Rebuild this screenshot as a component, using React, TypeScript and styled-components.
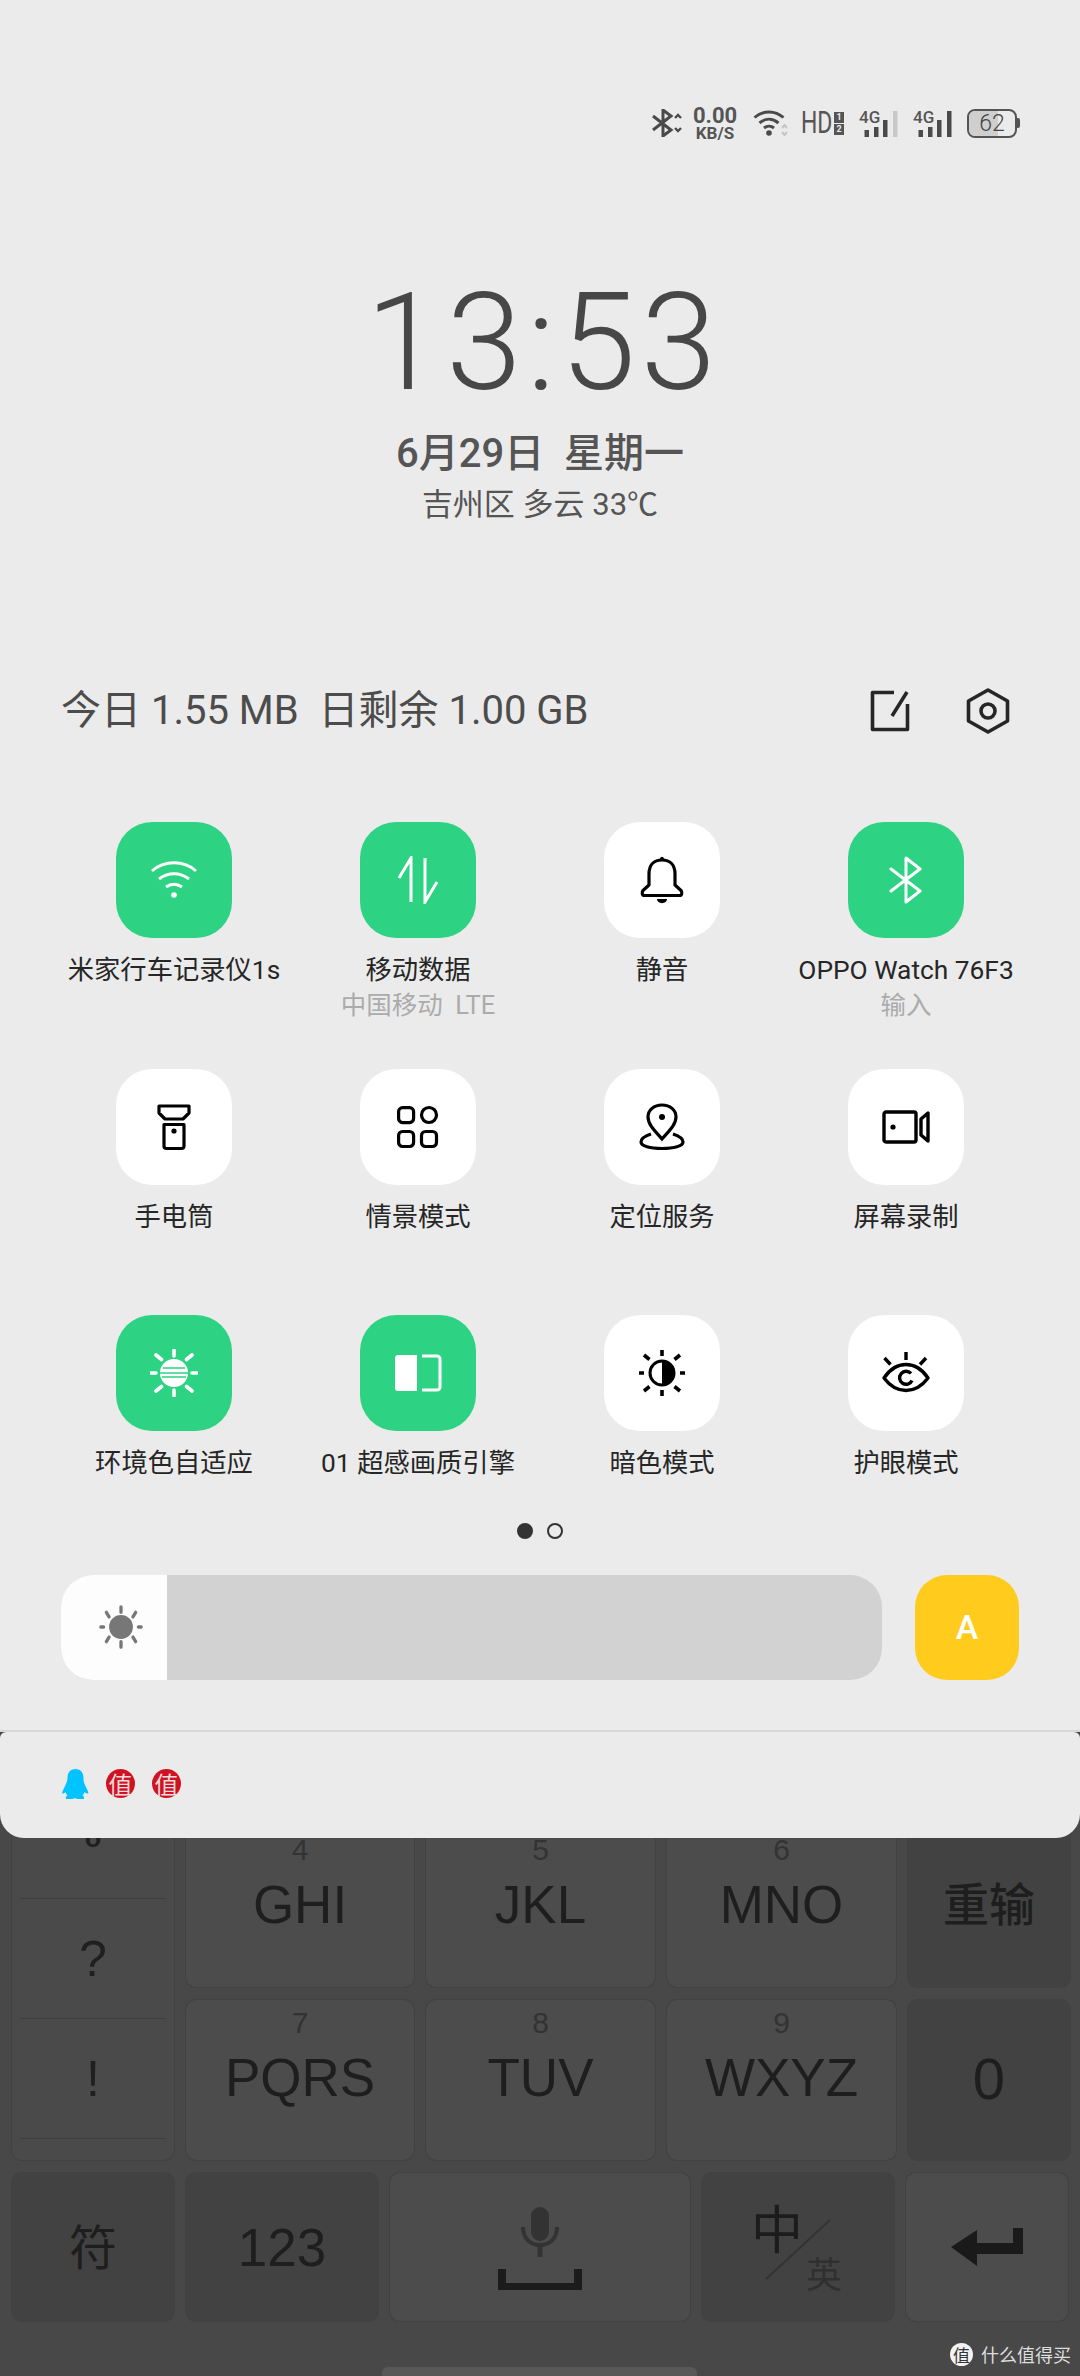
import React from 'react';
import styled, { createGlobalStyle } from 'styled-components';

const FONT = 'Roboto, "Noto Sans CJK SC", sans-serif';

const GlobalStyle = createGlobalStyle`
  html, body {
    margin: 0;
    padding: 0;
    background: #484848;
  }
  body {
    font-family: ${FONT};
  }
`;

const Screen = styled.div`
  position: relative;
  width: 1080px;
  height: 2376px;
  overflow: hidden;
  background: #484848;
  display: flex;
  flex-direction: column;
  justify-content: flex-end;
`;

/* ---------- shade ---------- */

const Shade = styled.div`
  position: absolute;
  top: 0;
  left: 0;
  right: 0;
  z-index: 2;
`;

const QuickPanel = styled.div`
  height: 1732px;
  box-sizing: border-box;
  background: #ebebeb;
  border-bottom: 2px solid #d8d8d8;
  display: flex;
  flex-direction: column;
`;

const StatusBar = styled.div`
  display: flex;
  justify-content: flex-end;
  align-items: center;
  height: 34px;
  margin-top: 106px;
  padding-right: 60px;
  color: #4a4a4a;
`;

const Speed = styled.div`
  width: 44px;
  margin: 0 16px 0 11px;
  display: flex;
  flex-direction: column;
  align-items: center;
  font-weight: 700;
  color: #555;
`;

const SpeedValue = styled.span`
  font-size: 22px;
  line-height: 20px;
`;

const SpeedUnit = styled.span`
  font-size: 17px;
  line-height: 15px;
`;

const Hd = styled.div`
  display: flex;
  align-items: center;
  margin: 0 15px 0 12px;
  color: #555;
`;

const HdText = styled.span`
  display: inline-block;
  width: 32px;
  font-size: 31px;
  font-weight: 400;
  line-height: 34px;
  transform: scaleX(0.74);
  transform-origin: left center;
`;

const SimStack = styled.div`
  display: flex;
  flex-direction: column;
  gap: 1px;
  margin-left: 1px;
`;

const SimNo = styled.span`
  width: 10px;
  height: 11px;
  background: #555;
  color: #ebebeb;
  font-size: 9px;
  font-weight: 700;
  line-height: 11px;
  text-align: center;
`;

const Signal = styled.div`
  position: relative;
  width: 40px;
  height: 28px;
  margin-right: 14px;
`;

const SignalLabel = styled.span`
  position: absolute;
  left: 0;
  top: 0;
  font-size: 17px;
  font-weight: 500;
  line-height: 17px;
  color: #555;
`;

const Battery = styled.div`
  position: relative;
  width: 46px;
  height: 25px;
  border: 2px solid #555;
  border-radius: 8px;
  overflow: hidden;
  display: flex;
  align-items: center;
  justify-content: center;
  font-size: 23px;
  font-weight: 300;
  color: #444;
  &::before {
    content: '';
    position: absolute;
    inset: 0 38% 0 0;
    background: #cfcfcf;
  }
`;

const BatteryText = styled.span`
  position: relative;
`;

const BatteryCap = styled.span`
  width: 3px;
  height: 10px;
  background: #555;
  border-radius: 0 2px 2px 0;
`;

const Clock = styled.div`
  margin-top: 143px;
  padding-left: 7px;
  text-align: center;
  font-family: Roboto, sans-serif;
  font-size: 136px;
  font-weight: 300;
  line-height: 120px;
  letter-spacing: 5px;
  color: #474747;
`;

const DateLine = styled.div`
  margin-top: 26px;
  text-align: center;
  font-size: 40px;
  font-weight: 500;
  line-height: 50px;
  color: #555;
  white-space: pre;
`;

const Weather = styled.div`
  margin-top: 5px;
  text-align: center;
  font-size: 31px;
  line-height: 42px;
  color: #555;
`;

const UsageRow = styled.div`
  display: flex;
  align-items: center;
  justify-content: space-between;
  height: 60px;
  margin-top: 155px;
  padding: 0 70px 0 61px;
`;

const UsageText = styled.div`
  font-size: 40px;
  line-height: 60px;
  color: #4c4c4c;
  white-space: pre;
`;

const UsageActions = styled.div`
  display: flex;
  align-items: center;
  gap: 56px;
`;

const TileGrid = styled.div`
  display: grid;
  grid-template-columns: repeat(4, 244px);
  grid-auto-rows: 246.5px;
  margin-top: 81px;
  padding: 0 52px;
`;

const Cell = styled.div`
  display: flex;
  flex-direction: column;
  align-items: center;
`;

const Tile = styled.div<{ $on?: boolean }>`
  width: 116px;
  height: 116px;
  border-radius: 36px;
  background: ${(p) => (p.$on ? '#2dd283' : '#ffffff')};
  color: ${(p) => (p.$on ? '#ffffff' : '#000000')};
  display: flex;
  align-items: center;
  justify-content: center;
`;

const TileLabel = styled.div`
  margin-top: 14px;
  font-size: 26.3px;
  line-height: 36px;
  color: #262626;
  white-space: nowrap;
`;

const TileSub = styled.div`
  font-size: 25.5px;
  line-height: 34px;
  color: #ababab;
  white-space: pre;
`;

const PageDots = styled.div`
  display: flex;
  justify-content: center;
  gap: 14px;
  margin-top: -39px;
`;

const Dot = styled.span<{ $active?: boolean }>`
  width: 16px;
  height: 16px;
  box-sizing: border-box;
  border-radius: 50%;
  border: 2px solid #333;
  background: ${(p) => (p.$active ? '#333' : 'transparent')};
`;

const BrightnessRow = styled.div`
  display: flex;
  gap: 33px;
  margin-top: 36px;
  padding: 0 61px;
`;

const Slider = styled.div`
  width: 821px;
  height: 105px;
  border-radius: 32px;
  overflow: hidden;
  background: #d2d2d2;
`;

const SliderFill = styled.div`
  width: 106px;
  height: 100%;
  box-sizing: border-box;
  padding-left: 14px;
  background: #fdfdfd;
  display: flex;
  align-items: center;
  justify-content: center;
`;

const AutoButton = styled.div`
  width: 104px;
  height: 105px;
  border-radius: 32px;
  background: #ffcc1e;
  color: #fff;
  font-size: 34px;
  font-weight: 500;
  display: flex;
  align-items: center;
  justify-content: center;
`;

const NotifyCard = styled.div`
  height: 106px;
  box-sizing: border-box;
  padding: 37px 0 0 62px;
  display: flex;
  align-items: flex-start;
  gap: 17px;
  background: #ebebeb;
  border-radius: 6px 6px 24px 24px;
`;

const ZhiBadge = styled.span`
  width: 29px;
  height: 29px;
  border-radius: 50%;
  background: #cf1322;
  color: #f6dcdc;
  font-family: "Noto Sans CJK SC", sans-serif;
  font-size: 24px;
  line-height: 29px;
  text-align: center;
`;

/* ---------- keyboard behind the shade ---------- */

const Keyboard = styled.div`
  display: flex;
  flex-direction: column;
  gap: 13px;
  padding: 0 12px 55px;
`;

const KeyGrid = styled.div`
  display: grid;
  grid-template-columns: 162px 228px 229px 229px 162px;
  grid-template-rows: 160px 160px;
  gap: 13px 12px;
`;

const SymbolColumn = styled.div`
  grid-row: span 2;
  box-sizing: border-box;
  display: flex;
  flex-direction: column;
  justify-content: flex-end;
  padding: 0 8px 21px;
  background: #4a4a4a;
  border-radius: 0 0 10px 10px;
  box-shadow: 0 0 0 1px #424242;
`;

const SymbolItem = styled.div`
  flex: none;
  height: 120px;
  box-sizing: border-box;
  border-bottom: 1px solid #3e3e3e;
  display: flex;
  align-items: center;
  justify-content: center;
  font-family: "Liberation Sans", sans-serif;
  font-size: 50px;
  color: #1f1f1f;
`;

const Period = styled.span`
  font-size: 27px;
  font-weight: 700;
`;

const Key = styled.div<{ $dark?: boolean; $w?: number }>`
  position: relative;
  ${(p) => (p.$w ? `width: ${p.$w}px; flex: none;` : '')}
  background: ${(p) => (p.$dark ? '#424242' : '#4c4c4c')};
  border-radius: 10px;
  box-shadow: 0 0 0 1px #424242;
  display: flex;
  flex-direction: column;
  align-items: center;
  justify-content: center;
  font-family: "Liberation Sans", "Noto Sans CJK SC", sans-serif;
  font-size: 53px;
  color: #1e1e1e;
`;

const LetterKey = styled(Key)`
  justify-content: flex-start;
  padding-top: 5px;
`;

const KeyNum = styled.span`
  font-size: 30px;
  line-height: 36px;
  color: #333;
`;

const KeyLetters = styled.span`
  line-height: 58px;
  margin-top: 8px;
`;

const ResetLabel = styled.span`
  font-size: 46px;
  font-weight: 500;
  margin-bottom: 12px;
`;

const ZeroLabel = styled.span`
  font-size: 58px;
  margin-bottom: 4px;
`;

const SymbolKeyLabel = styled.span`
  font-size: 48px;
  margin-bottom: 6px;
`;

const BottomRow = styled.div`
  display: flex;
  gap: 12px;
  height: 148px;
`;

const LangKey = styled(Key)`
  display: block;
`;

const LangMain = styled.span`
  position: absolute;
  left: 49px;
  top: 24px;
  font-family: "Noto Sans CJK SC", sans-serif;
  font-size: 52px;
  line-height: 60px;
  color: #1c1c1c;
`;

const LangSub = styled.span`
  position: absolute;
  left: 104px;
  top: 77px;
  font-family: "Noto Sans CJK SC", sans-serif;
  font-size: 36px;
  line-height: 44px;
  color: #303030;
`;

const LangSlash = styled.svg`
  position: absolute;
  left: 62px;
  top: 46px;
`;

const Watermark = styled.div`
  position: absolute;
  right: 9px;
  bottom: 9px;
  display: flex;
  align-items: center;
  gap: 8px;
  color: #dedede;
  font-size: 18px;
  line-height: 26px;
  font-family: "Noto Sans CJK SC", sans-serif;
`;

const WatermarkLogo = styled.span`
  width: 23px;
  height: 23px;
  border-radius: 50%;
  background: #f2f2f2;
  color: #333;
  font-size: 17px;
  line-height: 23px;
  text-align: center;
`;

const HomeBar = styled.div`
  position: absolute;
  left: 382px;
  bottom: 0;
  width: 315px;
  height: 9px;
  border-radius: 6px 6px 0 0;
  background: #585858;
`;

/* ---------- drawings ---------- */

const BluetoothStatus = () => (
  <svg width="31" height="28" viewBox="0 0 31 28" fill="none" stroke="#4a4a4a" strokeWidth="3">
    <path d="M2 7l18 14-8 6V1l8 6L2 21" />
    <path d="M24 9l3-3 3 3M24 19l3 3 3-3" strokeWidth="2.4" />
  </svg>
);

const WifiStatus = () => (
  <svg width="36" height="28" viewBox="0 0 36 28" fill="none">
    <path d="M1.5 8.5C10 1 22 1 30.5 8.5M6.500 14c6-5 13-5 19 0M11 19c3-2.500 7-2.500 10 0" stroke="#4a4a4a" strokeWidth="3" />
    <circle cx="16" cy="24" r="2.800" fill="#4a4a4a" />
    <path d="M29 19l2.500-3 2.500 3M29 23l2.500 3 2.500-3" stroke="#c4c4c4" strokeWidth="2" />
  </svg>
);

const Bars = ({ last }: { last: string }) => (
  <svg width="40" height="28" viewBox="0 0 40 28" style={{ position: 'absolute', left: 0, top: 0 }}>
    <rect x="5.500" y="21" width="4.500" height="7" fill="#4a4a4a" />
    <rect x="15" y="18" width="4.500" height="10" fill="#4a4a4a" />
    <rect x="24" y="11" width="4.500" height="17" fill="#4a4a4a" />
    <rect x="34" y="2" width="4.500" height="26" fill={last} />
  </svg>
);

const EditIcon = () => (
  <svg width="40" height="42" viewBox="0 0 40 42" fill="none" stroke="#262626" strokeWidth="3.600" strokeLinejoin="round">
    <path d="M24 2.500H2.500v37h35V14" />
    <path d="M37 2L22 26" />
  </svg>
);

const GearIcon = () => (
  <svg width="44" height="46" viewBox="0 0 44 46" fill="none" stroke="#262626" strokeWidth="3.600">
    <path d="M22 2l19.500 11v20L22 44 2.500 33V13z" strokeLinejoin="round" />
    <circle cx="22" cy="23" r="7" />
  </svg>
);

const WifiIcon = () => (
  <svg width="48" height="48" viewBox="0 0 48 48" fill="none" stroke="currentColor" strokeWidth="3">
    <path d="M2 15c12-11 32-11 44 0M9 23c9-7 21-7 30 0M16 31c5-3.500 11-3.500 16 0" />
    <circle cx="24" cy="39" r="2.800" fill="currentColor" stroke="none" />
  </svg>
);

const DataIcon = () => (
  <svg width="48" height="48" viewBox="0 0 48 48" fill="none" stroke="currentColor" strokeWidth="3">
    <path d="M5 22L17 2v44" />
    <path d="M31 2v44l12-20" />
  </svg>
);

const BellIcon = () => (
  <svg width="48" height="48" viewBox="0 0 48 48" fill="none" stroke="currentColor" strokeWidth="3.200" strokeLinejoin="round">
    <path d="M11 18C11 9 16 4 24 4s13 5 13 14v11l6 5.500c1.500 1.500 1 5-1.500 5h-35c-2.500 0-3-3.500-1.500-5l6-5.500z" />
    <circle cx="24" cy="2.500" r="1.800" fill="currentColor" stroke="none" />
    <path d="M19 43h10c0 5.500-10 5.500-10 0z" fill="currentColor" stroke="none" />
  </svg>
);

const BluetoothIcon = () => (
  <svg width="48" height="48" viewBox="0 0 48 48" fill="none" stroke="currentColor" strokeWidth="3" strokeLinejoin="round" strokeLinecap="round">
    <path d="M9 13l29 22-14 11V2l14 11L9 35" />
  </svg>
);

const FlashlightIcon = () => (
  <svg width="48" height="48" viewBox="0 0 48 48" fill="none" stroke="currentColor" strokeWidth="3.200" strokeLinejoin="round">
    <path d="M9 3h30v7l-6 6H15l-6-6z" />
    <path d="M14 21.500h20V43c0 1.500-1 2.500-2.500 2.500h-15c-1.500 0-2.500-1-2.500-2.500z" />
    <circle cx="24" cy="28" r="2.600" fill="currentColor" stroke="none" />
  </svg>
);

const ScenesIcon = () => (
  <svg width="48" height="48" viewBox="0 0 48 48" fill="none" stroke="currentColor" strokeWidth="3.200">
    <rect x="4.600" y="4.600" width="15" height="15" rx="4" />
    <circle cx="35" cy="12" r="7.500" />
    <rect x="4.600" y="28.500" width="15" height="15" rx="4" />
    <rect x="27.500" y="28.500" width="15" height="15" rx="4" />
  </svg>
);

const LocationIcon = () => (
  <svg width="48" height="48" viewBox="0 0 48 48" fill="none" stroke="currentColor" strokeWidth="3.200">
    <path d="M24 36c-6-7-14-14-14-22C10 7 16 2 24 2s14 5 14 12c0 8-8 15-14 22z" />
    <path d="M13 31c-6 2-10 5-10 8 0 4 9 6.500 21 6.500s21-2.500 21-6.500c0-3-4-6-10-8" />
    <circle cx="24" cy="14" r="3" fill="currentColor" stroke="none" />
  </svg>
);

const VideoIcon = () => (
  <svg width="48" height="36" viewBox="0 0 48 36" fill="none" stroke="currentColor" strokeWidth="3.400" strokeLinejoin="round">
    <rect x="2" y="3" width="32" height="30" rx="2" />
    <path d="M46 4v28l-7-6V10z" />
    <circle cx="11" cy="18" r="2.600" fill="currentColor" stroke="none" />
  </svg>
);

const Rays = ({ cap = 'butt' }: { cap?: 'butt' | 'round' }) => (
  <g stroke="currentColor" strokeWidth="3.600" strokeLinecap={cap}>
    <path d="M24 1v6M24 41v6M1 24h5M42 24h5M6 6l5.500 4.500M42 6l-5.500 4.500M6 42l5.500-4.500M42 42l-5.500-4.500" />
  </g>
);

const AmbientIcon = () => (
  <svg width="48" height="48" viewBox="0 0 48 48" fill="none">
    <Rays cap="round" />
    <circle cx="24" cy="24" r="14" fill="currentColor" />
    <path d="M13 19h22M10 24h28M12 28h24" stroke="#2dd283" strokeWidth="1.600" />
  </svg>
);

const EngineIcon = () => (
  <svg width="48" height="40" viewBox="0 0 48 40" fill="none">
    <path d="M4 2h19v36H4a3 3 0 0 1-3-3V5a3 3 0 0 1 3-3z" fill="currentColor" />
    <path d="M28 3h15a3 3 0 0 1 3 3v28a3 3 0 0 1-3 3H28" stroke="currentColor" strokeWidth="3" />
  </svg>
);

const DarkModeIcon = () => (
  <svg width="48" height="48" viewBox="0 0 48 48" fill="none">
    <Rays />
    <circle cx="24" cy="24" r="12" stroke="currentColor" strokeWidth="3" />
    <path d="M24 11a13 13 0 0 1 0 26z" fill="currentColor" />
  </svg>
);

const EyeIcon = () => (
  <svg width="48" height="48" viewBox="0 0 48 48" fill="none" stroke="currentColor" strokeWidth="3.400">
    <path d="M2 29C8 20 15 15.500 24 15.500S40 20 46 29c-6 8-13 12.500-22 12.500S8 37 2 29z" strokeLinejoin="round" />
    <path d="M24 3v8M2.500 9l6 6.500M44 9l-6 6.500" />
    <path d="M29 24.500A6.500 6.500 0 1 0 30 31.500" />
  </svg>
);

const SunGray = () => (
  <svg width="44" height="44" viewBox="0 0 48 48" fill="none" style={{ color: '#777' }}>
    <g stroke="currentColor" strokeWidth="3.600" strokeLinecap="round">
      <path d="M24 2v6M24 40v6M2 24h3M43 24h3M8 8l3 5M40 8l-3 5M8 40l3-5M40 40l-3-5" />
    </g>
    <circle cx="24" cy="24" r="13" fill="currentColor" />
  </svg>
);

const Penguin = () => (
  <svg width="27" height="30" viewBox="0 0 27 30">
    <path
      d="M13.500 0C8 0 5.500 4 5.500 9c0 2-.5 3.500-1.500 6-1.500 3-3.500 7-4 9 1 1 2 .5 3.500-1 .5 1.500 1 2.500 2 3.500-1 .5-2 1.500-1.500 3.500h6.500c1-.8 2.500-1 5 0H22c.5-2-.5-3-1.500-3.500 1-1 1.500-2 2-3.500 1.500 1.500 3 2 4 1-.5-2-2.500-6-4-9-1-2.500-1-4-1-6C21.500 4 19 0 13.500 0z"
      fill="#00c3ff"
    />
  </svg>
);

const Mic = () => (
  <svg width="40" height="50" viewBox="0 0 40 50" fill="none" style={{ marginTop: 2 }}>
    <rect x="11" y="0" width="18" height="34" rx="9" fill="#333" />
    <path d="M3 20c0 11 7 18 17 18s17-7 17-18" stroke="#333" strokeWidth="4" />
    <path d="M20 38v12" stroke="#333" strokeWidth="5" />
  </svg>
);

const SpaceBar = () => (
  <svg width="84" height="21" viewBox="0 0 84 21" style={{ marginTop: 12 }}>
    <path d="M0 0h8v14h68V0h8v21H0z" fill="#1c1c1c" />
  </svg>
);

const EnterArrow = () => (
  <svg width="72" height="38" viewBox="0 0 72 38">
    <path d="M72 0v26H26v12L0 19 26 2v13h36V0z" fill="#1a1a1a" />
  </svg>
);

type TileData = { label: string; sub?: string; on?: boolean; icon: React.ReactNode };

const tiles: TileData[] = [
  { label: '米家行车记录仪1s', on: true, icon: <WifiIcon /> },
  { label: '移动数据', sub: '中国移动  LTE', on: true, icon: <DataIcon /> },
  { label: '静音', icon: <BellIcon /> },
  { label: 'OPPO Watch 76F3', sub: '输入', on: true, icon: <BluetoothIcon /> },
  { label: '手电筒', icon: <FlashlightIcon /> },
  { label: '情景模式', icon: <ScenesIcon /> },
  { label: '定位服务', icon: <LocationIcon /> },
  { label: '屏幕录制', icon: <VideoIcon /> },
  { label: '环境色自适应', on: true, icon: <AmbientIcon /> },
  { label: '01 超感画质引擎', on: true, icon: <EngineIcon /> },
  { label: '暗色模式', icon: <DarkModeIcon /> },
  { label: '护眼模式', icon: <EyeIcon /> },
];

const letterKeys = [
  { num: '4', letters: 'GHI' },
  { num: '5', letters: 'JKL' },
  { num: '6', letters: 'MNO' },
];

const letterKeysLower = [
  { num: '7', letters: 'PQRS' },
  { num: '8', letters: 'TUV' },
  { num: '9', letters: 'WXYZ' },
];

const App = () => {
  return (
    <Screen>
      <GlobalStyle />
      <Shade>
        <QuickPanel>
          <StatusBar>
            <BluetoothStatus />
            <Speed>
              <SpeedValue>0.00</SpeedValue>
              <SpeedUnit>KB/S</SpeedUnit>
            </Speed>
            <WifiStatus />
            <Hd>
              <HdText>HD</HdText>
              <SimStack>
                <SimNo>1</SimNo>
                <SimNo>2</SimNo>
              </SimStack>
            </Hd>
            <Signal>
              <SignalLabel>4G</SignalLabel>
              <Bars last="#c8c8c8" />
            </Signal>
            <Signal>
              <SignalLabel>4G</SignalLabel>
              <Bars last="#4a4a4a" />
            </Signal>
            <Battery>
              <BatteryText>62</BatteryText>
            </Battery>
            <BatteryCap />
          </StatusBar>
          <Clock>13:53</Clock>
          <DateLine>6月29日  星期一</DateLine>
          <Weather>吉州区 多云 33℃</Weather>
          <UsageRow>
            <UsageText>今日 1.55 MB  日剩余 1.00 GB</UsageText>
            <UsageActions>
              <EditIcon />
              <GearIcon />
            </UsageActions>
          </UsageRow>
          <TileGrid>
            {tiles.map((t) => (
              <Cell key={t.label}>
                <Tile $on={t.on}>{t.icon}</Tile>
                <TileLabel>{t.label}</TileLabel>
                {t.sub && <TileSub>{t.sub}</TileSub>}
              </Cell>
            ))}
          </TileGrid>
          <PageDots>
            <Dot $active />
            <Dot />
          </PageDots>
          <BrightnessRow>
            <Slider>
              <SliderFill>
                <SunGray />
              </SliderFill>
            </Slider>
            <AutoButton>A</AutoButton>
          </BrightnessRow>
        </QuickPanel>
        <NotifyCard>
          <Penguin />
          <ZhiBadge>值</ZhiBadge>
          <ZhiBadge>值</ZhiBadge>
        </NotifyCard>
      </Shade>

      <Keyboard>
        <KeyGrid>
          <SymbolColumn>
            <SymbolItem><Period>o</Period></SymbolItem>
            <SymbolItem>?</SymbolItem>
            <SymbolItem>!</SymbolItem>
          </SymbolColumn>
          {letterKeys.map((k) => (
            <LetterKey key={k.num}>
              <KeyNum>{k.num}</KeyNum>
              <KeyLetters>{k.letters}</KeyLetters>
            </LetterKey>
          ))}
          <Key $dark><ResetLabel>重输</ResetLabel></Key>
          {letterKeysLower.map((k) => (
            <LetterKey key={k.num}>
              <KeyNum>{k.num}</KeyNum>
              <KeyLetters>{k.letters}</KeyLetters>
            </LetterKey>
          ))}
          <Key $dark><ZeroLabel>0</ZeroLabel></Key>
        </KeyGrid>
        <BottomRow>
          <Key $dark $w={162}><SymbolKeyLabel>符</SymbolKeyLabel></Key>
          <Key $dark $w={192}>123</Key>
          <Key $w={300}>
            <Mic />
            <SpaceBar />
          </Key>
          <LangKey $dark $w={192}>
            <LangMain>中</LangMain>
            <LangSlash width="68" height="62" viewBox="0 0 68 62">
              <path d="M66 1L2 60" stroke="#333" strokeWidth="2" />
            </LangSlash>
            <LangSub>英</LangSub>
          </LangKey>
          <Key $w={162}>
            <EnterArrow />
          </Key>
        </BottomRow>
      </Keyboard>

      <Watermark>
        <WatermarkLogo>值</WatermarkLogo>
        什么值得买
      </Watermark>
      <HomeBar />
    </Screen>
  );
};

export default App;
